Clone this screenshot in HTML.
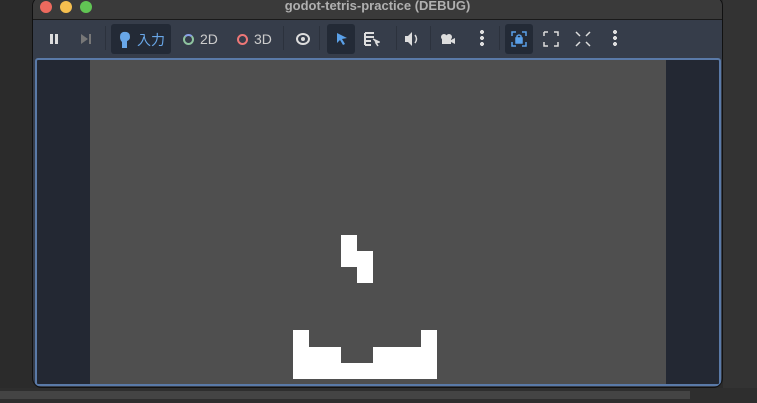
<!DOCTYPE html>
<html><head><meta charset="utf-8"><style>
*{margin:0;padding:0;box-sizing:border-box}
body{width:757px;height:403px;overflow:hidden;background:#2b2b2b;font-family:"Liberation Sans","Noto Sans CJK JP",sans-serif;position:relative}
.rbg{position:absolute;left:723px;top:0;width:34px;height:403px;background:#333}
.bot{position:absolute;left:0;top:388px;width:757px;height:15px;background:#2e2e2e}
.bot2{position:absolute;left:0;top:391px;width:690px;height:8px;background:#444}
.win{position:absolute;left:32px;top:-4px;width:691px;height:392px;background:#363d4a;border-radius:10px;border:1px solid #111;overflow:hidden}
.title{position:absolute;left:0;top:0;width:100%;height:23px;background:#3a3a3a;border-bottom:1px solid #1a1a1a;color:#b0b0b0;font-size:13px;font-weight:bold;text-align:center;line-height:18px}
.dot{position:absolute;top:4px;width:12px;height:12px;border-radius:50%}
.tb{position:absolute;top:23px;left:0;width:100%;height:38px;background:#363d4a}
.it{position:absolute;top:27px;color:#e0e0e0;font-size:14px}
.sel{position:absolute;background:#232a36;border-radius:3px}
.sep{position:absolute;top:29px;width:1px;height:24px;background:#2c323d}
.vp{position:absolute;left:2px;top:61px;width:686px;height:328px;border:2px solid #5a7aa8;border-radius:3px;background:#232833}
.game{position:absolute;left:53px;top:0;width:576px;height:324px;background:#4f4f4f}
.b{position:absolute;background:#fff}
</style></head><body>
<div class="rbg"></div><div class="bot"></div><div class="bot2"></div>
<div class="win">
<div class="title">godot-tetris-practice (DEBUG)
<div class="dot" style="left:7px;background:#ed6a5e"></div>
<div class="dot" style="left:27px;background:#f5bf4f"></div>
<div class="dot" style="left:47px;background:#61c554"></div>
</div>
<div class="tb"></div>
<div class="sel" style="left:78px;top:27px;width:60px;height:30px"></div>
<div class="sel" style="left:294px;top:27px;width:28px;height:30px"></div>
<div class="sel" style="left:472px;top:27px;width:28px;height:30px"></div>
<div class="sep" style="left:72px"></div><div class="sep" style="left:250px"></div><div class="sep" style="left:286px"></div><div class="sep" style="left:363px"></div><div class="sep" style="left:397px"></div><div class="sep" style="left:466px"></div>
<div style="position:absolute;left:17px;top:37px;width:3px;height:10px;background:#ddd"></div>
<div style="position:absolute;left:22px;top:37px;width:3px;height:10px;background:#ddd"></div>
<div style="position:absolute;left:48px;top:37px;border-left:7px solid #777;border-top:5px solid transparent;border-bottom:5px solid transparent"></div>
<div style="position:absolute;left:56px;top:37px;width:2px;height:10px;background:#777"></div>
<svg style="position:absolute;left:86px;top:34px" width="14" height="18"><path d="M4 1Q11 0 11 6Q11 9 8 10V17H3V11Q1 9 1 6Q1 2 4 1Z" fill="#69a7e8"/></svg>
<div class="it" style="left:104px;top:33px;color:#69a7e8;font-size:14px">入力</div>
<div style="position:absolute;left:150px;top:37px;width:11px;height:11px;border-radius:50%;border:2px solid #8fc4a0;border-top-color:#8aa0e8"></div>
<div class="it" style="left:167px;top:34px;color:#ccc">2D</div>
<div style="position:absolute;left:204px;top:37px;width:11px;height:11px;border-radius:50%;border:2px solid #e77"></div>
<div class="it" style="left:221px;top:34px;color:#ccc">3D</div>
<div style="position:absolute;left:263px;top:36px;width:14px;height:12px;border-radius:50%;border:2px solid #ddd"></div>
<div style="position:absolute;left:268px;top:40px;width:4px;height:4px;border-radius:50%;background:#ddd"></div>
<svg style="position:absolute;left:302px;top:35px" width="14" height="14"><path d="M2 1L12 6L7 7L10 12L8 13L5 8L2 11Z" fill="#5aa0e8"/></svg>
<svg style="position:absolute;left:331px;top:34px" width="16" height="16"><path d="M1 2H10M1 6H10M1 10H7M1 14H7M1 2V14" stroke="#ddd" stroke-width="2" fill="none"/><path d="M9 8L15 11L12 12L14 15" stroke="#ddd" stroke-width="1.5" fill="#ddd"/></svg>
<svg style="position:absolute;left:371px;top:34px" width="16" height="16"><path d="M1 5H4L8 1V15L4 11H1Z" fill="#ddd"/><path d="M11 4Q14 8 11 12" stroke="#ddd" stroke-width="1.5" fill="none"/></svg>
<svg style="position:absolute;left:407px;top:35px" width="16" height="14"><circle cx="4" cy="5" r="3" fill="#ddd"/><circle cx="9" cy="5" r="3" fill="#ddd"/><rect x="2" y="6" width="9" height="6" fill="#ddd"/><path d="M11 8L15 6V12L11 10Z" fill="#ddd"/></svg>
<div style="position:absolute;left:447px;top:33px;width:4px;height:16px;background:radial-gradient(circle at 2px 2px,#ddd 2px,transparent 2px) 0 0/4px 6px"></div>
<svg style="position:absolute;left:478px;top:34px" width="16" height="16" fill="none" stroke="#5aa0e8" stroke-width="1.5"><path d="M1 5V1H5M11 1H15V5M15 11V15H11M5 15H1V11"/><rect x="5" y="7" width="6" height="5" fill="#5aa0e8"/><path d="M6 7V5Q8 3 10 5V7"/></svg>
<svg style="position:absolute;left:510px;top:34px" width="16" height="16" fill="none" stroke="#ddd" stroke-width="1.5"><path d="M1 5V1M1 1H5M11 1H15V5M15 11V15H11M5 15H1V11"/></svg>
<svg style="position:absolute;left:542px;top:34px" width="16" height="16" fill="none" stroke="#ddd" stroke-width="1.5"><path d="M1 1L5 5M15 1L11 5M1 15L5 11M15 15L11 11"/></svg>
<div style="position:absolute;left:580px;top:33px;width:4px;height:16px;background:radial-gradient(circle at 2px 2px,#ddd 2px,transparent 2px) 0 0/4px 6px"></div>
<div class="vp"><div class="game">
<div class="b" style="left:251px;top:175px;width:16px;height:32px"></div>
<div class="b" style="left:267px;top:191px;width:16px;height:32px"></div>
<div class="b" style="left:203px;top:270px;width:16px;height:49px"></div>
<div class="b" style="left:219px;top:287px;width:32px;height:32px"></div>
<div class="b" style="left:251px;top:303px;width:32px;height:16px"></div>
<div class="b" style="left:283px;top:287px;width:48px;height:32px"></div>
<div class="b" style="left:331px;top:270px;width:16px;height:49px"></div>
</div></div>
</div>
</body></html>
